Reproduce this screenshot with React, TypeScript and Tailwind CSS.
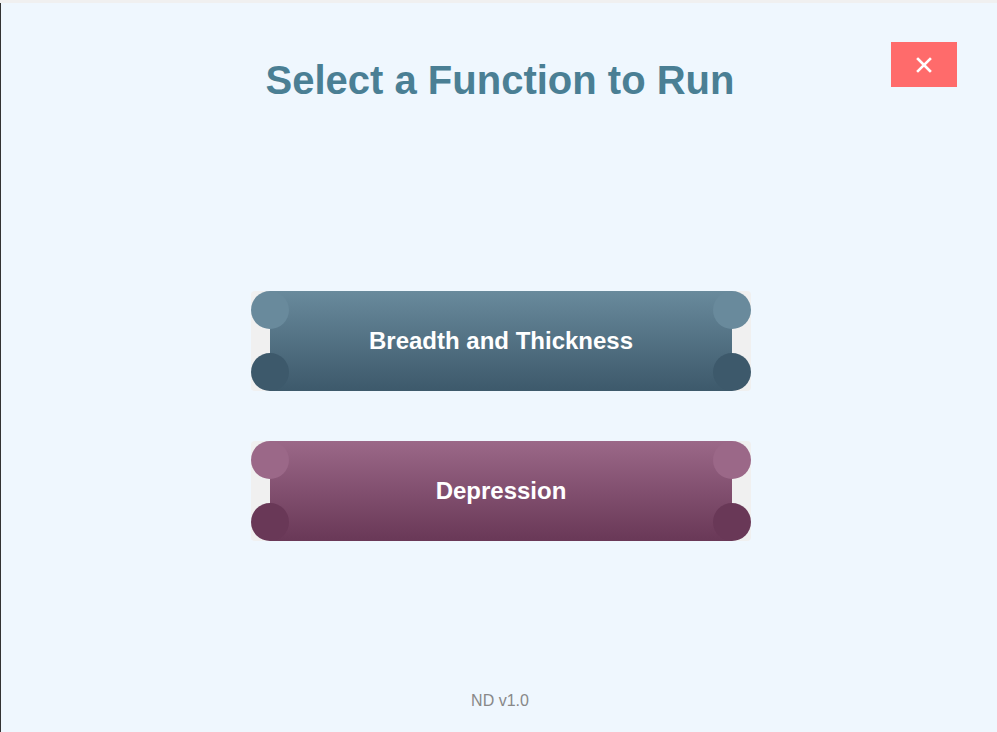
import React from 'react';

type Tone = {
  label: string;
  body: string;
  top: string;
  bottom: string;
};

const tones: Tone[] = [
  {
    label: 'Breadth and Thickness',
    body: 'bg-gradient-to-b from-[#698a9c] to-[#3d596b]',
    top: 'bg-[#698a9c]',
    bottom: 'bg-[#3d596b]',
  },
  {
    label: 'Depression',
    body: 'bg-gradient-to-b from-[#9b6888] to-[#693857]',
    top: 'bg-[#9b6888]',
    bottom: 'bg-[#693857]',
  },
];

const FunctionButton: React.FC<{ tone: Tone }> = ({ tone }) => (
  <button className="relative w-[500px] h-[100px] rounded-[4px] bg-[#f0f0f0] overflow-hidden cursor-pointer">
    {/* body between the corner knobs */}
    <div className={`absolute inset-y-0 left-[19px] right-[19px] ${tone.body}`} />
    <span className={`absolute left-0 top-0 w-[38px] h-[38px] rounded-full ${tone.top}`} />
    <span className={`absolute right-0 top-0 w-[38px] h-[38px] rounded-full ${tone.top}`} />
    <span className={`absolute left-0 bottom-0 w-[38px] h-[38px] rounded-full ${tone.bottom}`} />
    <span className={`absolute right-0 bottom-0 w-[38px] h-[38px] rounded-full ${tone.bottom}`} />
    <span className="relative text-white text-[24px] font-bold">{tone.label}</span>
  </button>
);

export default function App() {
  return (
    <div className="w-[997px] h-[732px] bg-[#f0f0f0] pt-[3px] overflow-hidden font-['Liberation_Sans',Arial,sans-serif]">
      <div className="relative h-full bg-[#eff7fe] border-l border-[#333] flex flex-col items-center">
        <button className="absolute right-[40px] top-[39px] w-[66px] h-[45px] bg-[#ff6b6b] flex items-center justify-center">
          <svg width="18" height="18" viewBox="0 0 18 18" fill="none" stroke="white" strokeWidth="2.6" strokeLinecap="square">
            <path d="M3 3 L15 15 M15 3 L3 15" />
          </svg>
        </button>

        <h1 className="mt-[54px] ml-[2px] text-[40px] leading-[46px] font-bold text-[#4a7f94]">Select a Function to Run</h1>

        <div className="mt-[188px] ml-[4px] flex flex-col gap-[50px]">
          {tones.map((t) => (
            <FunctionButton key={t.label} tone={t} />
          ))}
        </div>

        <div className="mt-auto mb-[19px] ml-[2px] text-[16px] text-[#888]">ND v1.0</div>
      </div>
    </div>
  );
}
